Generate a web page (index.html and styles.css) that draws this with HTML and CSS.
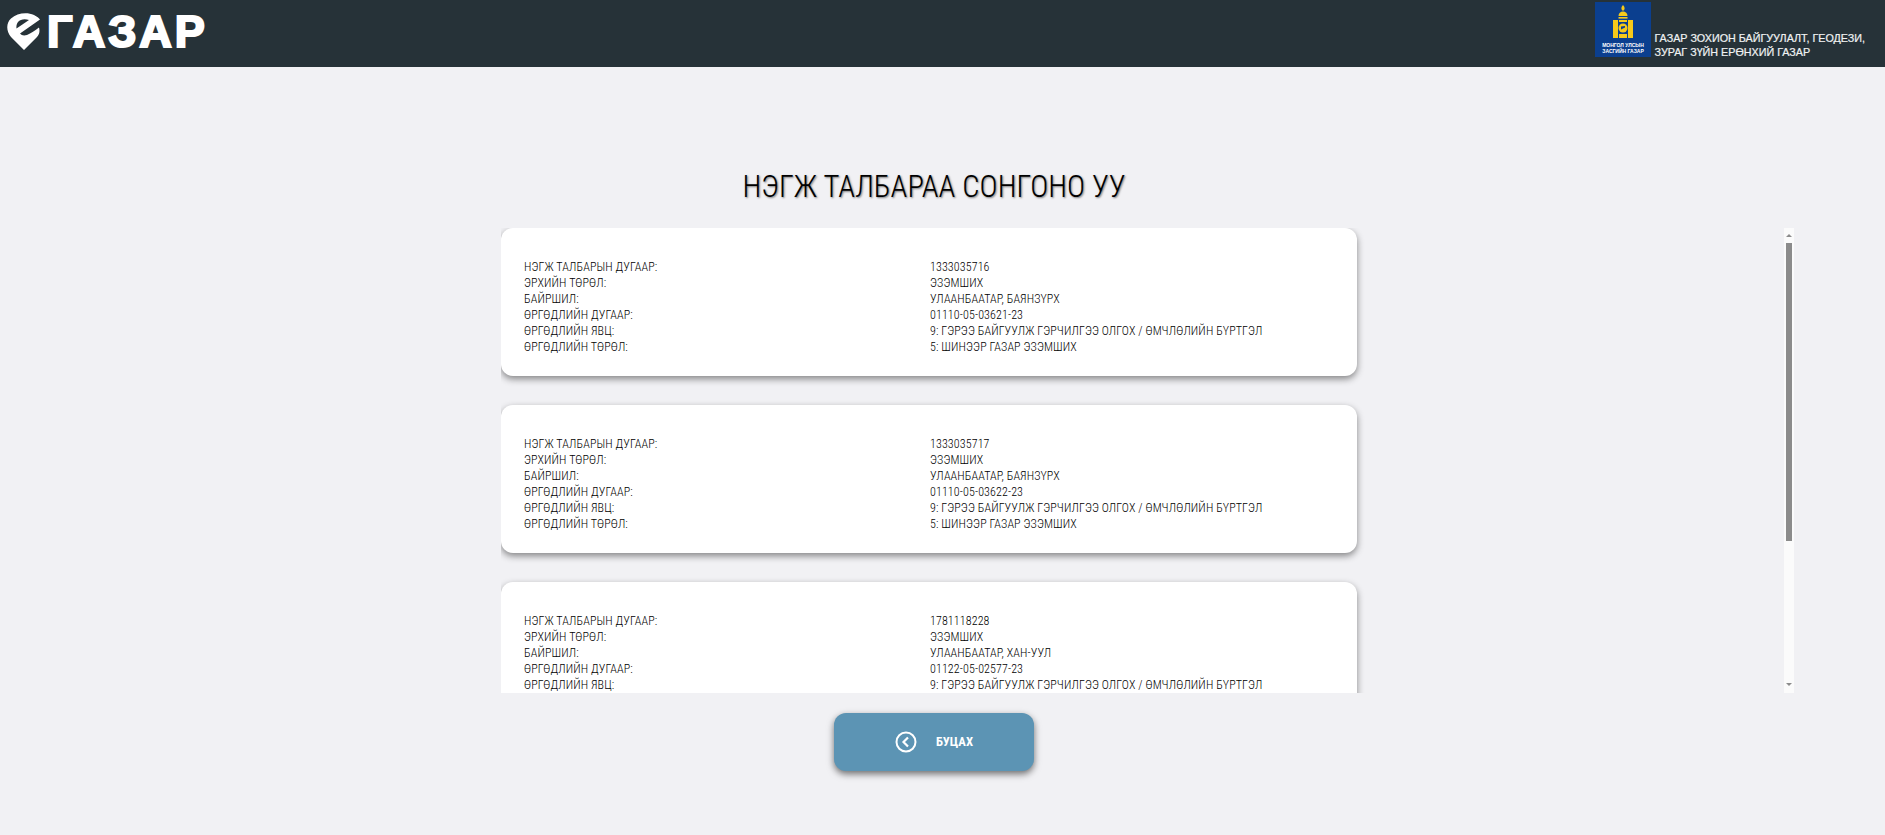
FILE: index.html
```html
<!DOCTYPE html>
<html lang="mn">
<head>
<meta charset="utf-8">
<title>еГазар</title>
<link rel="stylesheet" href="styles.css">
</head>
<body>
<header class="topbar">
  <div class="brand">
    <svg class="brand-pin" viewBox="0 0 34 38" width="34" height="38" aria-hidden="true">
      <path fill="#fff" fill-rule="evenodd" d="M17 37 L4 24 C-1 18 -1 10 4 5.500 C10 0 20 -1 27 2 C30 3.500 32 5 33 6.500 L13 20.500 C14.500 22.500 17 23 20 22 C24 20.500 28 17.500 32 14.500 C33 18 32.500 21 30 24 Z M9.500 15.500 L22 7 C18 5.500 13.500 6 11 9 C9.500 11 9.200 13.500 9.500 15.500 Z"/>
    </svg>
    <span class="brand-name">ГАЗАР</span>
  </div>
  <div class="agency">
    <div class="agency-badge">
      <svg viewBox="0 0 56 55" width="56" height="55" aria-hidden="true">
        <rect width="56" height="55" fill="#0b3f8f"/>
        <g fill="#f6c91a">
          <path d="M28 3 C30 5 30 7 28.800 8.500 L27.200 8.500 C26 7 26 5 28 3 Z"/>
          <path d="M23.500 14 C23.500 11 25.500 9.500 28 9.500 C30.500 9.500 32.500 11 32.500 14 Z"/>
          <rect x="23.500" y="15" width="9" height="1.600"/>
          <rect x="18" y="18" width="5" height="18"/>
          <rect x="33" y="18" width="5" height="18"/>
          <rect x="24" y="18" width="8" height="2"/>
          <circle cx="28" cy="26" r="4.500"/>
          <rect x="24" y="32" width="8" height="4"/>
        </g>
        <path fill="#0b3f8f" d="M26 24.500 L30 24 L30 25.500 L26 27.500 Z"/>
        <text class="badge-text" x="28" y="45">МОНГОЛ УЛСЫН</text>
        <text class="badge-text" x="28" y="51">ЗАСГИЙН ГАЗАР</text>
      </svg>
    </div>
    <p class="agency-name">ГАЗАР ЗОХИОН БАЙГУУЛАЛТ, ГЕОДЕЗИ,<br>ЗУРАГ ЗҮЙН ЕРӨНХИЙ ГАЗАР</p>
  </div>
</header>

<main class="page">
  <h1 class="title">НЭГЖ ТАЛБАРАА СОНГОНО УУ</h1>
  <div class="list-frame">
    <section class="list">
      <article class="card">
        <span>НЭГЖ ТАЛБАРЫН ДУГААР:</span><span>1333035716</span>
        <span>ЭРХИЙН ТӨРӨЛ:</span><span>ЭЗЭМШИХ</span>
        <span>БАЙРШИЛ:</span><span>УЛААНБААТАР, БАЯНЗҮРХ</span>
        <span>ӨРГӨДЛИЙН ДУГААР:</span><span>01110-05-03621-23</span>
        <span>ӨРГӨДЛИЙН ЯВЦ:</span><span>9: ГЭРЭЭ БАЙГУУЛЖ ГЭРЧИЛГЭЭ ОЛГОХ / ӨМЧЛӨЛИЙН БҮРТГЭЛ</span>
        <span>ӨРГӨДЛИЙН ТӨРӨЛ:</span><span>5: ШИНЭЭР ГАЗАР ЭЗЭМШИХ</span>
      </article>
      <article class="card">
        <span>НЭГЖ ТАЛБАРЫН ДУГААР:</span><span>1333035717</span>
        <span>ЭРХИЙН ТӨРӨЛ:</span><span>ЭЗЭМШИХ</span>
        <span>БАЙРШИЛ:</span><span>УЛААНБААТАР, БАЯНЗҮРХ</span>
        <span>ӨРГӨДЛИЙН ДУГААР:</span><span>01110-05-03622-23</span>
        <span>ӨРГӨДЛИЙН ЯВЦ:</span><span>9: ГЭРЭЭ БАЙГУУЛЖ ГЭРЧИЛГЭЭ ОЛГОХ / ӨМЧЛӨЛИЙН БҮРТГЭЛ</span>
        <span>ӨРГӨДЛИЙН ТӨРӨЛ:</span><span>5: ШИНЭЭР ГАЗАР ЭЗЭМШИХ</span>
      </article>
      <article class="card">
        <span>НЭГЖ ТАЛБАРЫН ДУГААР:</span><span>1781118228</span>
        <span>ЭРХИЙН ТӨРӨЛ:</span><span>ЭЗЭМШИХ</span>
        <span>БАЙРШИЛ:</span><span>УЛААНБААТАР, ХАН-УУЛ</span>
        <span>ӨРГӨДЛИЙН ДУГААР:</span><span>01122-05-02577-23</span>
        <span>ӨРГӨДЛИЙН ЯВЦ:</span><span>9: ГЭРЭЭ БАЙГУУЛЖ ГЭРЧИЛГЭЭ ОЛГОХ / ӨМЧЛӨЛИЙН БҮРТГЭЛ</span>
      </article>
    </section>
    <div class="scrollbar" aria-hidden="true">
      <span class="arrow-up"></span>
      <span class="thumb"></span>
      <span class="arrow-down"></span>
    </div>
  </div>
  <button class="back" type="button">
    <svg viewBox="0 0 22 22" width="22" height="22" aria-hidden="true">
      <circle cx="11" cy="11" r="9.500" fill="none" stroke="#fff" stroke-width="2"/>
      <path d="M13 6.500 L8.500 11 L13 15.500" fill="none" stroke="#fff" stroke-width="2.200"/>
    </svg>
    <span class="back-label">БУЦАХ</span>
  </button>
</main>
</body>
</html>
```
FILE: styles.css
```css
* { box-sizing: border-box; }
html, body { height: 100%; }
body {
  margin: 0;
  overflow: hidden;
  background: #f1f1f4;
  font-family: Roboto, "Liberation Sans", sans-serif;
  color: #111;
}
.topbar {
  height: 67px;
  background: #263238;
  display: flex;
  align-items: flex-start;
  justify-content: space-between;
}
.brand {
  display: flex;
  align-items: center;
  gap: 6px;
  padding: 12px 0 0 7px;
}
.brand-name {
  font-family: "Liberation Sans", sans-serif;
  font-weight: 700;
  font-size: 45px;
  line-height: 40px;
  letter-spacing: 3px;
  color: #fff;
  -webkit-text-stroke: 2.2px #fff;
}
.agency {
  display: flex;
  align-items: flex-start;
  gap: 4px;
  padding: 2px 20px 0 0;
}
.agency-badge { height: 55px; }
.agency-badge svg { display: block; }
.badge-text {
  font-family: "Liberation Sans", sans-serif;
  font-size: 5px;
  font-weight: 700;
  fill: #fff;
  text-anchor: middle;
}
.agency-name {
  margin: 29px 0 0;
  font-family: "Liberation Sans", sans-serif;
  font-size: 10.75px;
  line-height: 14px;
  color: #f0f2f3;
  -webkit-text-stroke: 0.2px #f0f2f3;
}
.page {
  width: calc(100% - 17px);
  display: flex;
  flex-direction: column;
  align-items: center;
}
.title {
  margin: 102px 0 0;
  font-size: 30.6px;
  line-height: 36px;
  font-weight: 300;
  font-stretch: 75%;
  color: #000;
  text-shadow: 1px 1px 2px rgba(0, 0, 0, 0.5);
}
.list-frame {
  align-self: flex-start;
  margin: 23px 0 0 501px;
  width: 1293px;
  height: 465px;
  display: flex;
  justify-content: space-between;
}
.list {
  width: 868px;
  margin-right: -5px;
  overflow: hidden;
  display: flex;
  flex-direction: column;
  gap: 29px;
}
.card {
  flex: none;
  width: 856px;
  height: 148px;
  padding: 31px 23px 21px;
  background: #fff;
  border-radius: 12px;
  box-shadow: 0 3px 7px rgba(0, 0, 0, 0.45);
  display: grid;
  grid-template-columns: 406px 1fr;
  align-content: start;
  font-size: 12px;
  line-height: 16px;
  font-weight: 300;
  font-stretch: 75%;
  letter-spacing: 0.12px;
  color: #000;
}
.scrollbar {
  flex: none;
  width: 10px;
  height: 100%;
  background: #fbfbfb;
  padding: 6px 2px 7px;
  display: flex;
  flex-direction: column;
  align-items: center;
}
.arrow-up {
  border: 3px solid transparent;
  border-top: 0;
  border-bottom: 3px solid #8b8b8b;
}
.arrow-down {
  margin-top: auto;
  border: 3px solid transparent;
  border-bottom: 0;
  border-top: 3px solid #8b8b8b;
}
.thumb {
  width: 6px;
  height: 298px;
  margin-top: 6px;
  background: #8b8b8b;
}
.back {
  margin-top: 20px;
  width: 200px;
  height: 58px;
  border: 0;
  border-radius: 12px;
  background: #5c94b4;
  box-shadow: 0 3px 7px rgba(0, 0, 0, 0.55);
  display: flex;
  align-items: center;
  justify-content: center;
  gap: 19px;
  font: 700 12.7px Roboto, sans-serif;
  font-stretch: 75%;
  color: #fff;
}
.back-label { padding-bottom: 1px; }
```
